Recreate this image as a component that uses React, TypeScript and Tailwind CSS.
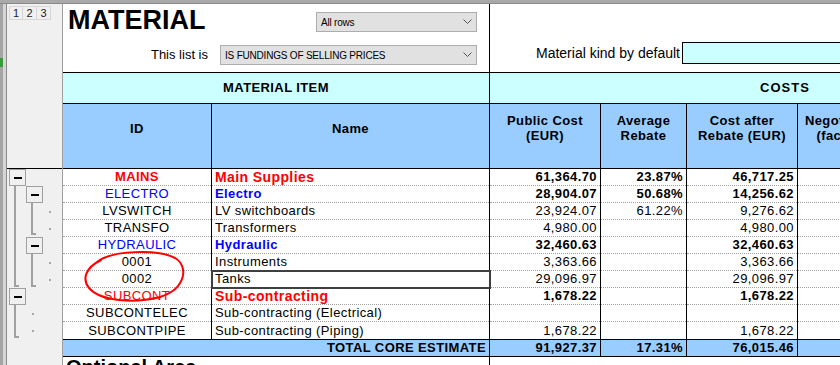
import React from 'react';

type Tone = 'top' | 'group' | 'sub' | 'plain';

type Row = {
  id: string;
  name: string;
  tone: Tone;
  pub?: string;
  avg?: string;
  after?: string;
  bold?: boolean;
  avgBold?: boolean;
  selected?: boolean;
};

const rows: Row[] = [
  { id: 'MAINS', name: 'Main Supplies', tone: 'top', pub: '61,364.70', avg: '23.87%', after: '46,717.25', bold: true, avgBold: true },
  { id: 'ELECTRO', name: 'Electro', tone: 'group', pub: '28,904.07', avg: '50.68%', after: '14,256.62', bold: true, avgBold: true },
  { id: 'LVSWITCH', name: 'LV switchboards', tone: 'plain', pub: '23,924.07', avg: '61.22%', after: '9,276.62' },
  { id: 'TRANSFO', name: 'Transformers', tone: 'plain', pub: '4,980.00', after: '4,980.00' },
  { id: 'HYDRAULIC', name: 'Hydraulic', tone: 'group', pub: '32,460.63', after: '32,460.63', bold: true },
  { id: '0001', name: 'Instruments', tone: 'plain', pub: '3,363.66', after: '3,363.66' },
  { id: '0002', name: 'Tanks', tone: 'plain', pub: '29,096.97', after: '29,096.97', selected: true },
  { id: 'SUBCONT', name: 'Sub-contracting', tone: 'sub', pub: '1,678.22', after: '1,678.22', bold: true },
  { id: 'SUBCONTELEC', name: 'Sub-contracting (Electrical)', tone: 'plain' },
  { id: 'SUBCONTPIPE', name: 'Sub-contracting (Piping)', tone: 'plain', pub: '1,678.22', after: '1,678.22' },
];

const idTone: Record<Tone, string> = {
  top: 'font-bold text-[#ff0000]',
  group: 'text-[#0000ff]',
  sub: 'text-[#ff0000]',
  plain: 'text-black',
};

const nameTone: Record<Tone, string> = {
  top: 'font-bold text-[14px] text-[#ff0000]',
  group: 'font-bold text-[#0000ff]',
  sub: 'font-bold text-[14px] text-[#ff0000]',
  plain: 'text-black',
};

const Chevron = () => (
  <svg width="9" height="6" viewBox="0 0 9 6" className="shrink-0">
    <path d="M0.5 0.5 L4.5 4.5 L8.5 0.5" fill="none" stroke="#555" strokeWidth="1" />
  </svg>
);

const Select = ({ label, width }: { label: string; width: string }) => (
  <div
    className={`${width} h-[20px] flex items-center justify-between bg-[#e1e1e1] border border-[#adadad] pl-[4px] pr-[4px] text-[10px] tracking-[-0.2px] text-black`}
  >
    <span>{label}</span>
    <Chevron />
  </div>
);

// one sheet cell: black right border, dotted row line at the bottom
const Cell = ({
  width,
  last,
  className,
  children,
}: {
  width: string;
  last?: boolean;
  className?: string;
  children?: React.ReactNode;
}) => (
  <div className={`${width} shrink-0 h-[17px] flex flex-col border-r border-black`}>
    <div className={`flex-1 flex items-center leading-[16px] whitespace-nowrap ${className ?? ''}`}>{children}</div>
    {!last && <div className="border-t border-dotted border-[#a0a0a0]" />}
  </div>
);

const OutlineTree = () => (
  <svg width="55" height="172" className="block">
    {/* MAINS */}
    <rect x="7" y="17" width="2" height="101" fill="#a0a0a0" />
    <rect x="7" y="116" width="5" height="2" fill="#a0a0a0" />
    <rect x="2.5" y="0.5" width="16" height="16" fill="#f0f0f0" stroke="#a0a0a0" />
    <rect x="7" y="8" width="8" height="2" fill="#000" />
    {/* ELECTRO */}
    <rect x="24" y="34" width="2" height="32" fill="#a0a0a0" />
    <rect x="24" y="64" width="5" height="2" fill="#a0a0a0" />
    <rect x="19.5" y="17.5" width="16" height="16" fill="#f0f0f0" stroke="#a0a0a0" />
    <rect x="24" y="25" width="8" height="2" fill="#000" />
    <rect x="42" y="42" width="2" height="2" fill="#a8a8a8" />
    <rect x="42" y="59" width="2" height="2" fill="#a8a8a8" />
    {/* HYDRAULIC */}
    <rect x="24" y="85" width="2" height="33" fill="#a0a0a0" />
    <rect x="24" y="116" width="5" height="2" fill="#a0a0a0" />
    <rect x="19.5" y="68.5" width="16" height="16" fill="#f0f0f0" stroke="#a0a0a0" />
    <rect x="24" y="76" width="8" height="2" fill="#000" />
    <rect x="42" y="93" width="2" height="2" fill="#a8a8a8" />
    <rect x="42" y="110" width="2" height="2" fill="#a8a8a8" />
    {/* SUBCONT */}
    <rect x="7" y="136" width="2" height="33" fill="#a0a0a0" />
    <rect x="7" y="167" width="5" height="2" fill="#a0a0a0" />
    <rect x="2.5" y="119.5" width="16" height="16" fill="#f0f0f0" stroke="#a0a0a0" />
    <rect x="7" y="127" width="8" height="2" fill="#000" />
    <rect x="25" y="144" width="2" height="2" fill="#a8a8a8" />
    <rect x="25" y="161" width="2" height="2" fill="#a8a8a8" />
  </svg>
);

const App = () => {
  return (
    <div className="relative w-[840px] h-[365px] overflow-hidden bg-white flex flex-col font-['Liberation_Sans',Arial,sans-serif] text-black">
      <div className="h-[4px] shrink-0 bg-[#a9a9a9] border-b border-[#8a8a8a]" />

      <div className="flex flex-1 min-h-0">
        {/* window frame */}
        <div className="w-[7px] shrink-0 flex">
          <div className="w-[3px] bg-[#a5a5a5] flex flex-col">
            <div className="mt-[54px] h-[9px] bg-[#3b9a3b]" />
          </div>
          <div className="w-[3px] bg-[#d6d6d6]" />
          <div className="w-[1px] bg-[#8a8a8a]" />
        </div>

        {/* outline panel */}
        <div className="w-[56px] shrink-0 bg-[#f0f0f0] border-r border-[#a0a0a0] flex flex-col">
          <div className="h-[164px]">
            <div className="mt-[2px] ml-[2px] flex text-[11px] text-[#222] leading-none">
              <div className="w-[14px] h-[14px] border border-[#d6d6d6] flex items-center justify-center">1</div>
              <div className="w-[14px] h-[14px] border-y border-r border-[#d6d6d6] flex items-center justify-center">2</div>
              <div className="w-[14px] h-[14px] border-y border-r border-[#d6d6d6] flex items-center justify-center">3</div>
            </div>
          </div>
          <div className="border-t border-black">
            <OutlineTree />
          </div>
        </div>

        {/* sheet */}
        <div className="flex-1 min-w-0 overflow-hidden flex flex-col">
          {/* title area */}
          <div className="flex h-[68px] shrink-0">
            <div className="w-[427px] shrink-0 border-r border-black flex flex-col">
              <div className="flex items-start">
                <div className="ml-[5px] mt-[1px] text-[27px] font-bold leading-[30px]">MATERIAL</div>
                <div className="ml-auto mr-[12px] mt-[8px]">
                  <Select label="All rows" width="w-[161px]" />
                </div>
              </div>
              <div className="flex items-center justify-end mr-[12px] mt-[10px]">
                <span className="text-[13px]">This list is</span>
                <div className="ml-[12px]">
                  <Select label="IS FUNDINGS OF SELLING PRICES" width="w-[257px]" />
                </div>
              </div>
            </div>
            <div className="flex items-center h-[22px] mt-[38px] pl-[46px]">
              <span className="text-[14px] whitespace-nowrap">Material kind by default</span>
              <div className="ml-[2px] w-[200px] h-[22px] shrink-0 border border-black bg-[#ccffff]" />
            </div>
          </div>

          <div className="tracking-[0.4px] text-[13px] flex flex-col">
            {/* group header */}
            <div className="flex h-[32px] shrink-0 bg-[#ccffff] border-y border-black font-bold">
              <div className="w-[427px] shrink-0 border-r border-black flex items-center justify-center">MATERIAL ITEM</div>
              <div className="w-[590px] shrink-0 flex items-center justify-center tracking-[1px]">COSTS</div>
            </div>

            {/* column header */}
            <div className="flex h-[65px] shrink-0 bg-[#99ccff] border-b border-black font-bold leading-[15px] text-center">
              <div className="w-[149px] shrink-0 border-r border-black flex items-center justify-center pb-[16px]">ID</div>
              <div className="w-[278px] shrink-0 border-r border-black flex items-center justify-center pb-[16px]">Name</div>
              <div className="w-[111px] shrink-0 border-r border-black flex items-center justify-center pb-[16px]">
                Public Cost<br />(EUR)
              </div>
              <div className="w-[86px] shrink-0 border-r border-black flex items-center justify-center pb-[16px]">
                Average<br />Rebate
              </div>
              <div className="w-[111px] shrink-0 border-r border-black flex items-center justify-center pb-[16px] whitespace-nowrap">
                Cost after<br />Rebate (EUR)
              </div>
              <div className="w-[86px] shrink-0 border-r border-black flex items-center justify-center pb-[16px] whitespace-nowrap">
                Negotiated<br />(factor)
              </div>
            </div>

            {/* data rows */}
            {rows.map((r, i) => {
              const last = i === rows.length - 1;
              return (
                <div key={r.id} className="flex">
                  <Cell width="w-[149px]" last={last} className={`justify-center ${idTone[r.tone]}`}>
                    {r.id}
                  </Cell>
                  <div
                    className={
                      r.selected
                        ? 'relative z-10 outline-2 outline-[#3f3f3f] -outline-offset-1'
                        : ''
                    }
                  >
                    <Cell width="w-[278px]" last={last} className={`pl-[3px] ${nameTone[r.tone]}`}>
                      {r.name}
                    </Cell>
                  </div>
                  <Cell width="w-[111px]" last={last} className={`justify-end pr-[3px] ${r.bold ? 'font-bold' : ''}`}>
                    {r.pub}
                  </Cell>
                  <Cell width="w-[86px]" last={last} className={`justify-end pr-[3px] ${r.avgBold ? 'font-bold' : ''}`}>
                    {r.avg}
                  </Cell>
                  <Cell width="w-[111px]" last={last} className={`justify-end pr-[3px] ${r.bold ? 'font-bold' : ''}`}>
                    {r.after}
                  </Cell>
                  <Cell width="w-[86px]" last={last} />
                </div>
              );
            })}

            {/* total */}
            <div className="flex h-[18px] shrink-0 bg-[#99ccff] border-y border-black font-bold leading-[16px]">
              <div className="w-[427px] shrink-0 border-r border-black flex items-center justify-end pr-[3px]">TOTAL CORE ESTIMATE</div>
              <div className="w-[111px] shrink-0 border-r border-black flex items-center justify-end pr-[3px]">91,927.37</div>
              <div className="w-[86px] shrink-0 border-r border-black flex items-center justify-end pr-[3px]">17.31%</div>
              <div className="w-[111px] shrink-0 border-r border-black flex items-center justify-end pr-[3px]">76,015.46</div>
              <div className="w-[86px] shrink-0 border-r border-black" />
            </div>

            <div className="flex h-[20px] shrink-0">
              <div className="w-[427px] shrink-0 border-r border-black pl-[3px] pt-[1px] text-[20px] font-bold leading-[18px] tracking-normal">
                Optional Area
              </div>
            </div>
          </div>
        </div>
      </div>

      {/* hand-drawn red mark */}
      <svg className="absolute left-0 top-0 pointer-events-none" width="840" height="365">
        <path
          d="M97 262 C112 250 158 249 175 258 C189 266 186 289 160 297 C134 304 100 301 89 288 C82 279 85 268 101 260"
          fill="none"
          stroke="#ff0000"
          strokeWidth="2"
          strokeLinecap="round"
        />
      </svg>
    </div>
  );
};

export default App;
